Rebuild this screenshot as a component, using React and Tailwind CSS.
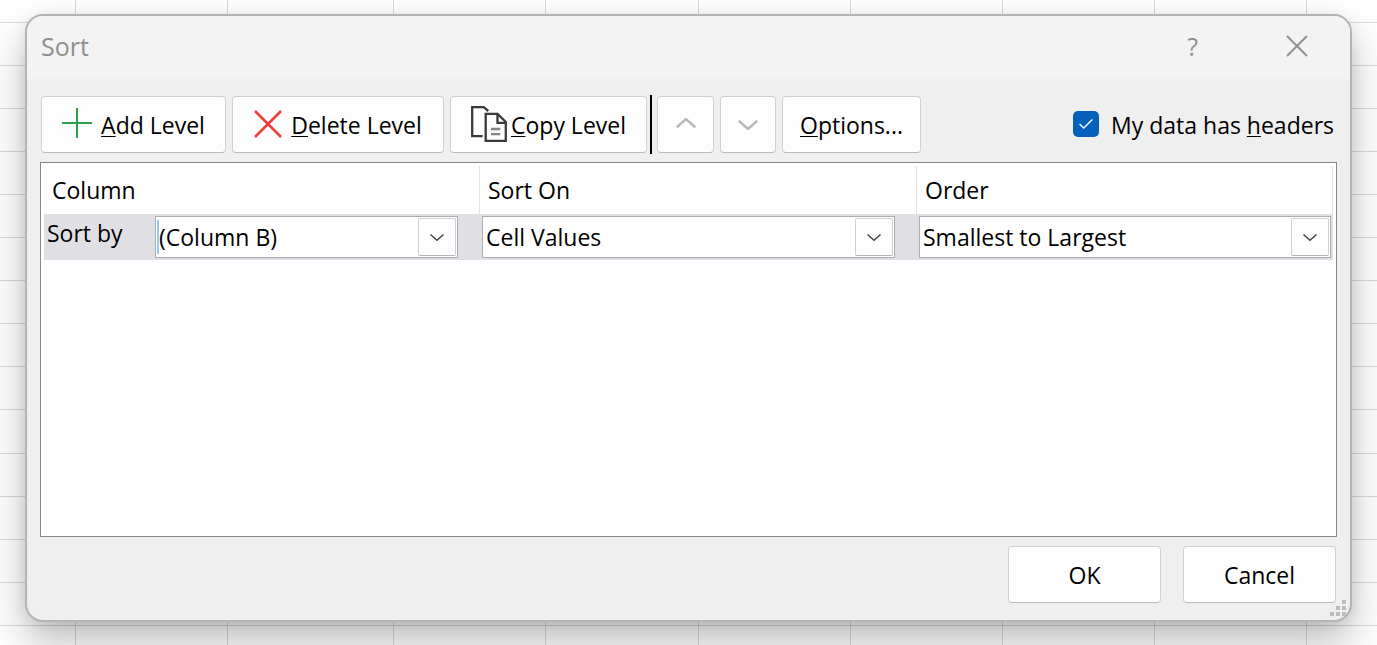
const COLUMNS = ["w-[76px]", "w-[152px]", "w-[166px]", "w-[152px]", "w-[153px]", "w-[152px]", "w-[152px]", "w-[152px]", "w-[152px]"];
const ROWS = ["h-[23px]", ...Array(9).fill("h-[43px]"), "h-[44px]", ...Array(20).fill("h-[43px]")];

function Sheet() {
  return (
    <div aria-hidden="true" className="col-start-1 row-start-1 h-0 min-h-full overflow-hidden bg-white">
      {ROWS.map((height, r) => (
        <div key={r} className={`flex ${height}`}>
          {COLUMNS.map((width, c) => (
            <div key={c} className={`shrink-0 border-r border-b border-[#d9d9d9] ${width}`} />
          ))}
          <div className="grow border-b border-[#d9d9d9]" />
        </div>
      ))}
    </div>
  );
}

function Key({ children }) {
  return <span className="underline decoration-1 underline-offset-2 [text-decoration-skip-ink:none]">{children}</span>;
}

function Button({ className, children, ...rest }) {
  return (
    <button
      type="button"
      className={`flex h-[57px] shrink-0 items-center justify-center rounded-[4px] border border-[#d0d0d0] border-b-[#bababa] bg-[#fdfdfd] whitespace-pre ${className}`}
      {...rest}
    >
      {children}
    </button>
  );
}

function PlusIcon() {
  return (
    <svg width="30" height="30" viewBox="0 0 30 30" fill="none" stroke="#2f9e4b" strokeWidth="2" className="mb-1 shrink-0">
      <path d="M15 0V30M0 15H30" />
    </svg>
  );
}

function CrossIcon() {
  return (
    <svg width="28" height="28" viewBox="0 0 28 28" fill="none" stroke="#f03c3c" strokeWidth="2.500" className="mb-[2px] shrink-0">
      <path d="M1 1L27 27M27 1L1 27" />
    </svg>
  );
}

function CopyIcon() {
  return (
    <svg width="36" height="36" viewBox="0 0 36 36" fill="none" stroke="#3a3a3a" strokeWidth="2.300" className="mb-[2px] shrink-0">
      <path d="M11.700 30.200H1.200V1.200H12.700L17.300 5" />
      <path d="M14.700 7.800H26.500L34.800 16V34.800H14.700Z" fill="#fdfdfd" />
      <path d="M26.500 7.800V16.800H34.800" />
      <path d="M20 23H29.300M20 28.200H29.300" stroke="#858580" />
    </svg>
  );
}

function Chevron({ up, className, size, stroke = 2 }) {
  return (
    <svg width={size} height={size / 2} viewBox="0 0 20 10" fill="none" stroke="currentColor" strokeWidth={stroke} className={className}>
      <path d={up ? "M.7 9.300L10 1L19.300 9.300" : "M.7 .7L10 9L19.300 .7"} />
    </svg>
  );
}

function Dropdown({ label, value, focused }) {
  return (
    <div className="relative flex h-[42px] grow items-center border border-[#acacb4] bg-white">
      <select
        aria-label={label}
        className={`h-[34px] w-full appearance-none bg-white pr-10 outline-none ${focused ? "ml-px border-l-2 border-[#99c9ef]" : "pl-[3px]"}`}
      >
        <option>{value}</option>
      </select>
      <span className="pointer-events-none absolute top-px right-px flex size-[38px] items-center justify-center rounded-[2px] border border-[#d0d0d0] border-b-[#b4b4b4] bg-[#fdfdfd] text-[#444]">
        <Chevron size={14} />
      </span>
    </div>
  );
}

function SortTable() {
  const head = "border-r border-[#e2e2e2] pl-2 text-left font-normal";
  return (
    <table className="w-full table-fixed border-separate border-spacing-0">
      <colgroup>
        <col className="w-[436px]" />
        <col className="w-[437px]" />
        <col />
      </colgroup>
      <thead>
        <tr className="h-12">
          <th className={head}>Column</th>
          <th className={head}>Sort On</th>
          <th className={head}>Order</th>
        </tr>
      </thead>
      <tbody>
        <tr className="bg-[#e0dfe4]">
          <td className="py-[2px] pr-[22px]">
            <div className="flex items-center">
              <span className="w-[111px] shrink-0 pb-2 pl-[3px]">Sort by</span>
              <Dropdown label="Sort by" value="(Column B)" focused />
            </div>
          </td>
          <td className="py-[2px] pr-[22px] pl-[2px]">
            <Dropdown label="Sort On" value="Cell Values" />
          </td>
          <td className="p-[2px]">
            <Dropdown label="Order" value="Smallest to Largest" />
          </td>
        </tr>
      </tbody>
    </table>
  );
}

function Grip() {
  return (
    <svg width="16" height="16" viewBox="0 0 16 16" fill="#bdbdbd" className="absolute right-1 bottom-1">
      <path d="M12 0h4v4h-4zM6 6h4v4h-4zM12 6h4v4h-4zM0 12h4v4h-4zM6 12h4v4h-4zM12 12h4v4h-4z" />
    </svg>
  );
}

export default function App() {
  return (
    <div className="grid min-h-screen grid-cols-1 overflow-hidden font-['Open_Sans','Noto_Sans',sans-serif] text-[23px] leading-[30px] text-black">
      <Sheet />
      <div
        role="dialog"
        aria-labelledby="sort-title"
        className="relative col-start-1 row-start-1 mx-[25px] mt-[14px] mb-[23px] flex flex-col overflow-hidden rounded-[18px] border-2 border-[#b4b4b4] bg-[#efefef] shadow-[0_20px_40px_rgba(0,0,0,0.26),0_2px_14px_rgba(0,0,0,0.08)]"
      >
        <header className="flex h-[63px] shrink-0 items-center bg-[#f3f3f3] pr-[42px] pb-[3px] pl-[14px] text-[25px] text-[#8f8f8f]">
          <h1 id="sort-title" className="grow">Sort</h1>
          <button type="button" aria-label="Help" className="mr-[88px]">?</button>
          <button type="button" aria-label="Close">
            <svg width="22" height="22" viewBox="0 0 22 22" fill="none" stroke="currentColor" strokeWidth="1.800">
              <path d="M1 1L21 21M21 1L1 21" />
            </svg>
          </button>
        </header>
        <div className="flex grow flex-col gap-[9px] px-[13px] pt-[17px] pb-[17px]">
          <div className="flex items-center gap-[6px] pl-px">
            <Button className="w-[185px] gap-[9px]"><PlusIcon /><span><Key>A</Key>dd Level</span></Button>
            <Button className="w-[212px] gap-[9px]"><CrossIcon /><span><Key>D</Key>elete Level</span></Button>
            <Button className="w-[197px] gap-1"><CopyIcon /><span><Key>C</Key>opy Level</span></Button>
            <div className="-my-px -mr-px -ml-[3px] w-[2px] self-stretch bg-black" />
            <Button className="w-[57px] text-[#b8b8b8]" aria-label="Move Up" disabled><Chevron up size={20} stroke={2.4} className="mb-1" /></Button>
            <Button className="w-[56px] text-[#b8b8b8]" aria-label="Move Down" disabled><Chevron size={20} stroke={2.4} /></Button>
            <Button className="w-[139px]"><span><Key>O</Key>ptions...</span></Button>
            <label className="ml-auto flex items-center gap-3 pr-[3px] whitespace-nowrap">
              <span className="relative mb-[2px] flex size-[26px]">
                <input type="checkbox" defaultChecked className="size-[26px] appearance-none rounded-[5px] bg-[#0360bb]" />
                <svg width="14" height="10" viewBox="0 0 14 10" fill="none" stroke="#fff" strokeWidth="1.400" className="pointer-events-none absolute top-2 left-[6px]">
                  <path d="M.6 5L4.700 9L13.400 .6" />
                </svg>
              </span>
              <span>My data has <Key>h</Key>eaders</span>
            </label>
          </div>
          <div className="grow border border-[#828790] bg-white p-[3px]">
            <SortTable />
          </div>
          <div className="flex justify-end gap-[22px] pr-px">
            <Button className="w-[153px]">OK</Button>
            <Button className="w-[153px]">Cancel</Button>
          </div>
        </div>
        <Grip />
      </div>
    </div>
  );
}
